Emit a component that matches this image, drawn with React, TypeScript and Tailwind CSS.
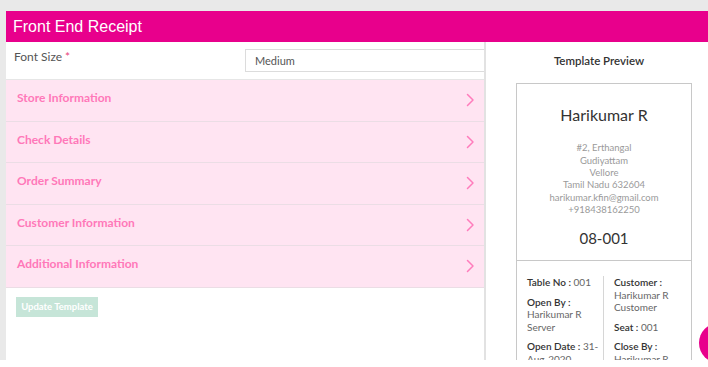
import React from "react";

const sections = [
  "Store Information",
  "Check Details",
  "Order Summary",
  "Customer Information",
  "Additional Information",
];

function Chevron() {
  return (
    <svg width="9" height="14" viewBox="0 0 9 14" fill="none">
      <path d="M1.5 1.5L7 7L1.5 12.5" stroke="#ff7cbc" strokeWidth="1.5" strokeLinecap="round" strokeLinejoin="round" />
    </svg>
  );
}

export default function App() {
  return (
    <div className="relative h-[360px] w-[708px] overflow-hidden bg-[#e9e9e9] pl-[6px] pt-[11px]" style={{ fontFamily: "Lato, 'Noto Sans', sans-serif" }}>
      <div className="flex h-[31px] items-center bg-[#e8008c] pl-[7px] text-[16px] text-white" style={{ fontFamily: "'Liberation Sans', Arial, sans-serif" }}>
        Front End Receipt
      </div>
      <div className="flex h-[318px]">
        <div className="flex w-[480px] shrink-0 flex-col border-r-2 border-[#e2e2e2] bg-white">
          <div className="flex h-[38px] items-start border-b border-[#e6e6e6]">
            <div className="w-[239px] pl-[8px] pt-[6px] text-[12px] text-[#555]">
              Font Size <span className="text-[#e8447a]">*</span>
            </div>
            <div className="mt-[7px] flex h-[23px] flex-1 items-center border border-r-0 border-[#dcdcdc] pl-[9px] pt-[2px] text-[11px] text-[#555]">
              Medium
            </div>
          </div>
          {sections.map((s) => (
            <div key={s} className="flex h-[41.6px] items-start justify-between border-b border-[#ebdde5] bg-[#ffe4f2] pl-[11px] pr-[9px] pt-[9px]">
              <span className="text-[12px] font-bold text-[#ff78b9]">{s}</span>
              <span className="mt-[4px]"><Chevron /></span>
            </div>
          ))}
          <div className="flex pl-[10px] pt-[9px]">
            <div className="flex h-[20px] w-[82px] items-center justify-center bg-[#c6e5d8] text-[9.5px] font-bold text-white">Update Template</div>
          </div>
        </div>
        <div className="w-[240px] shrink-0 bg-white">
          <div className="pr-[14px] pt-[10px] text-center text-[11.5px] font-semibold text-[#333]">Template Preview</div>
          <div className="ml-[30px] mt-[14px] w-[176px] border border-[#c8c8c8]">
            <div className="flex h-[177px] flex-col items-center border-b border-[#c8c8c8]">
              <div className="pt-[19px] text-[16px] text-[#333]">Harikumar R</div>
              <div className="mt-[15px] flex flex-col items-center text-[9.5px] leading-[12.4px] text-[#9a9a9a]">
                <span>#2, Erthangal</span>
                <span>Gudiyattam</span>
                <span>Vellore</span>
                <span>Tamil Nadu 632604</span>
                <span>harikumar.kfin@gmail.com</span>
                <span>+918438162250</span>
              </div>
              <div className="mt-[10px] text-[15px] text-[#333]">08-001</div>
            </div>
            <div className="flex pl-[10px] pt-[15px] text-[10px] leading-[12.5px] text-[#666]">
              <div className="w-[77px] border-r border-[#d6d6d6] pr-[4px]">
                <div><span className="font-semibold text-[#333]">Table No :</span> 001</div>
                <div className="mt-[7px] font-semibold text-[#333]">Open By :</div>
                <div>Harikumar R</div>
                <div>Server</div>
                <div className="mt-[7px]"><span className="font-semibold text-[#333]">Open Date :</span> 31-Aug-2020</div>
              </div>
              <div className="pl-[10px]">
                <div className="font-semibold text-[#333]">Customer :</div>
                <div>Harikumar R</div>
                <div>Customer</div>
                <div className="mt-[7px]"><span className="font-semibold text-[#333]">Seat :</span> 001</div>
                <div className="mt-[7px] font-semibold text-[#333]">Close By :</div>
                <div>Harikumar R</div>
              </div>
            </div>
          </div>
        </div>
      </div>
      <div className="absolute left-[699px] top-[323px] h-[40px] w-[40px] rounded-full bg-[#e8008c]" />
    </div>
  );
}
